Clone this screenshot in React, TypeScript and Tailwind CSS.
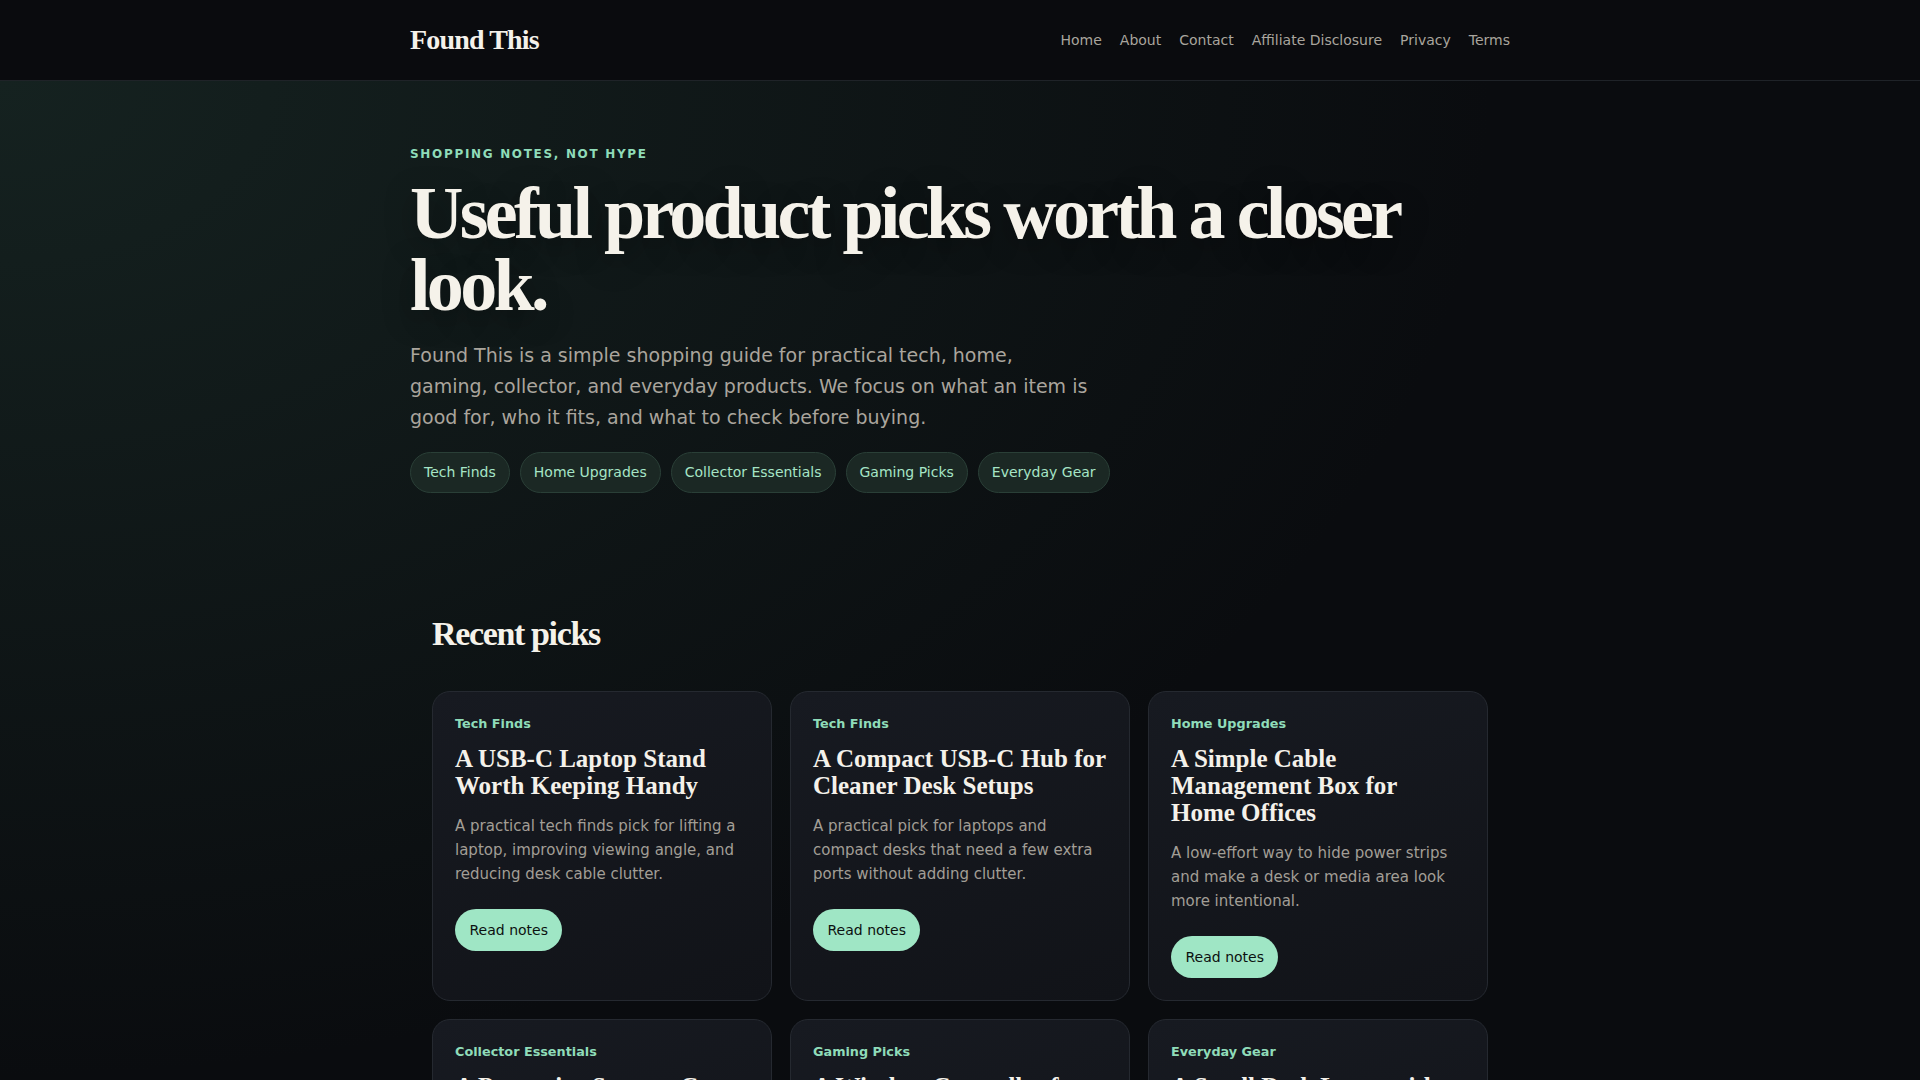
const navLinks = ['Home', 'About', 'Contact', 'Affiliate Disclosure', 'Privacy', 'Terms']

const categories = ['Tech Finds', 'Home Upgrades', 'Collector Essentials', 'Gaming Picks', 'Everyday Gear']

const picks = [
  {
    category: 'Tech Finds',
    title: 'A USB-C Laptop Stand Worth Keeping Handy',
    blurb: 'A practical tech finds pick for lifting a laptop, improving viewing angle, and reducing desk cable clutter.',
  },
  {
    category: 'Tech Finds',
    title: 'A Compact USB-C Hub for Cleaner Desk Setups',
    blurb: 'A practical pick for laptops and compact desks that need a few extra ports without adding clutter.',
  },
  {
    category: 'Home Upgrades',
    title: 'A Simple Cable Management Box for Home Offices',
    blurb: 'A low-effort way to hide power strips and make a desk or media area look more intentional.',
  },
  {
    category: 'Collector Essentials',
    title: 'A Protective Storage Case for Trading Cards',
    blurb: 'A tidy way to store and display a growing collection while keeping cards safe from dust and wear.',
  },
  {
    category: 'Gaming Picks',
    title: 'A Wireless Controller for Couch and Desk Play',
    blurb: 'A comfortable controller pick for people who switch between PC games and the living room.',
  },
  {
    category: 'Everyday Gear',
    title: 'A Small Desk Lamp with Adjustable Light',
    blurb: 'A compact lamp for reading, late work sessions, and small spaces that need softer light.',
  },
]

export default function App() {
  return (
    <div className="min-h-screen bg-[#0a0c0f] font-['DejaVu_Sans',sans-serif] text-[#f4f1ea]">
      {/* Top bar */}
      <header className="border-b border-[#1f2328] bg-[#0a0b0e]">
        <div className="mx-auto flex h-[80px] max-w-[1100px] items-center justify-between">
          <a className="font-['Liberation_Serif',serif] text-[28px] font-bold tracking-[-0.03em] text-[#f4f1ea]">
            Found This
          </a>
          <nav className="flex items-center gap-[18px] text-[14px] text-[#a9a59d]">
            {navLinks.map((l) => (
              <a key={l}>{l}</a>
            ))}
          </nav>
        </div>
      </header>

      <main className="bg-[radial-gradient(ellipse_at_0%_0%,rgba(30,52,46,0.55),transparent_55%)]">
        {/* Hero */}
        <section className="mx-auto max-w-[1100px] pt-[64px]">
          <p className="text-[12px] font-bold leading-[18px] tracking-[0.14em] text-[#8fdcb9]">
            SHOPPING NOTES, NOT HYPE
          </p>
          <h1 className="mt-[14px] font-['Liberation_Serif',serif] text-[74px] font-bold leading-[72px] tracking-[-0.05em] text-[#f5f2ea] [text-shadow:0_8px_30px_rgba(0,0,0,0.35)]">
            Useful product picks worth a closer look.
          </h1>
          <p className="mt-[19px] max-w-[680px] text-[19px] leading-[31px] text-[#aaa59d]">
            Found This is a simple shopping guide for practical tech, home, gaming, collector, and everyday products. We
            focus on what an item is good for, who it fits, and what to check before buying.
          </p>
          <div className="mt-[19px] flex flex-wrap gap-[10px]">
            {categories.map((c) => (
              <span
                key={c}
                className="flex h-[41px] items-center rounded-full border border-[#2a3f37] bg-[#1b2824] px-[13px] text-[14px] text-[#a6e5c6]"
              >
                {c}
              </span>
            ))}
          </div>
        </section>

        {/* Recent picks */}
        <section className="mx-auto max-w-[1100px] px-[22px] pt-[121px] pb-[60px]">
          <h2 className="font-['Liberation_Serif',serif] text-[34px] font-bold leading-[40.8px] tracking-[-0.04em] text-[#f5f2ea]">
            Recent picks
          </h2>
          <div className="mt-[36px] grid grid-cols-3 gap-[18px]">
            {picks.map((p, i) => (
              <PickCard key={i} {...p} />
            ))}
          </div>
        </section>
      </main>
    </div>
  )
}

function PickCard({ category, title, blurb }: { category: string; title: string; blurb: string }) {
  return (
    <article className="rounded-[18px] border border-[#252930] bg-[linear-gradient(160deg,#171a21,#111318)] p-[22px]">
      <div className="text-[12.8px] font-bold leading-[19.2px] text-[#8fdcb9]">{category}</div>
      <h3 className="mt-[12px] font-['Liberation_Serif',serif] text-[25px] font-bold leading-[27px] text-[#f4f1ea]">
        {title}
      </h3>
      <p className="mt-[15px] text-[15px] leading-[24px] text-[#a29e96]">{blurb}</p>
      <a className="mt-[23px] inline-flex h-[42px] items-center rounded-full bg-[#9fe6c5] px-[14.5px] text-[14px] text-[#0c1110]">
        Read notes
      </a>
    </article>
  )
}
